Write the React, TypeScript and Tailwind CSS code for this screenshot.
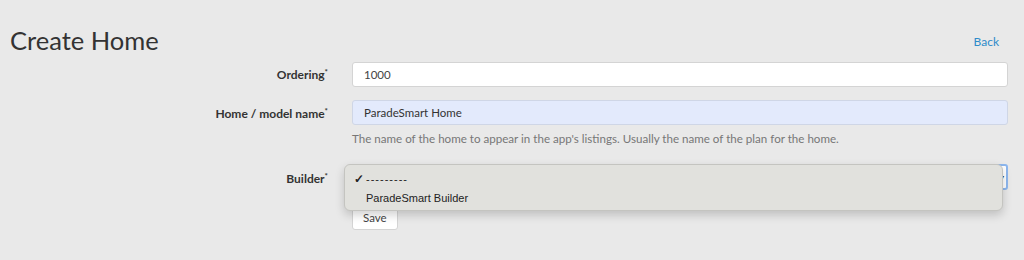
export default function App() {
  const body = { fontFamily: 'Lato, "Open Sans", sans-serif' };
  const sys = { fontFamily: '"Liberation Sans", Arial, sans-serif' };

  return (
    <div className="h-[260px] w-[1024px] overflow-hidden bg-[#e9e9e9] text-[#333]" style={body}>
      <div className="flex items-start justify-between pl-[10px] pr-[25px] pt-[26px]">
        <h1 className="text-[25.5px] leading-[28px] text-[#333]">Create Home</h1>
        <a href="#" className="mt-[7px] text-[12px] text-[#2e8bc9]">
          Back
        </a>
      </div>

      <form className="mt-[8px] flex flex-col pr-[16px]">
        <div className="grid grid-cols-[328px_1fr] items-center gap-x-[24px]">
          <label className="text-right text-[12px] font-bold text-[#333]">
            Ordering<sup className="text-[8px]">*</sup>
          </label>
          <div className="flex h-[25px] items-center rounded-[3px] border border-[#d4d4d4] bg-white px-[11px] text-[11.5px] text-[#444]">
            1000
          </div>
        </div>

        <div className="mt-[13px] grid grid-cols-[328px_1fr] gap-x-[24px]">
          <label className="pt-[5px] text-right text-[12px] font-bold text-[#333]">
            Home / model name<sup className="text-[8px]">*</sup>
          </label>
          <div>
            <div className="flex h-[25px] items-center rounded-[3px] border border-[#cfd6e6] bg-[#e3eafc] px-[11px] text-[11.5px] text-[#333]">
              ParadeSmart Home
            </div>
            <p className="mt-[5px] text-[11.6px] text-[#777]">
              The name of the home to appear in the app's listings. Usually the name of the plan for the home.
            </p>
          </div>
        </div>

        <div className="mt-[17px] grid grid-cols-[328px_1fr] gap-x-[24px]">
          <label className="pt-[6px] text-right text-[12px] font-bold text-[#333]">
            Builder<sup className="text-[8px]">*</sup>
          </label>
          <div className="relative">
            <div className="flex h-[26px] items-center justify-end rounded-[3px] border-2 border-[#8db7ee] bg-white pr-[2px]">
              <span className="text-[8px] leading-none text-[#333]">▾</span>
            </div>
            <button
              type="button"
              className="mt-[15px] h-[25px] rounded-[3px] border border-[#d4d4d4] bg-white px-[10px] text-[11.5px] text-[#444]"
            >
              Save
            </button>

            <div
              className="absolute left-[-8px] right-[5px] top-0 h-[47px] rounded-[6px] border border-[#c4c4c0] bg-[#e1e1dd] shadow-[0_4px_10px_rgba(0,0,0,0.18)]"
              style={sys}
            >
              <div className="flex items-center pl-[9px] pt-[5px] text-[11px] leading-[18px] text-[#222]">
                <span className="w-[12px] text-[12px] font-bold">✓</span>
                <span className="tracking-[1px]">---------</span>
              </div>
              <div className="pl-[21px] pt-[1px] text-[11px] leading-[18px] text-[#222]">ParadeSmart Builder</div>
            </div>
          </div>
        </div>
      </form>
    </div>
  );
}
